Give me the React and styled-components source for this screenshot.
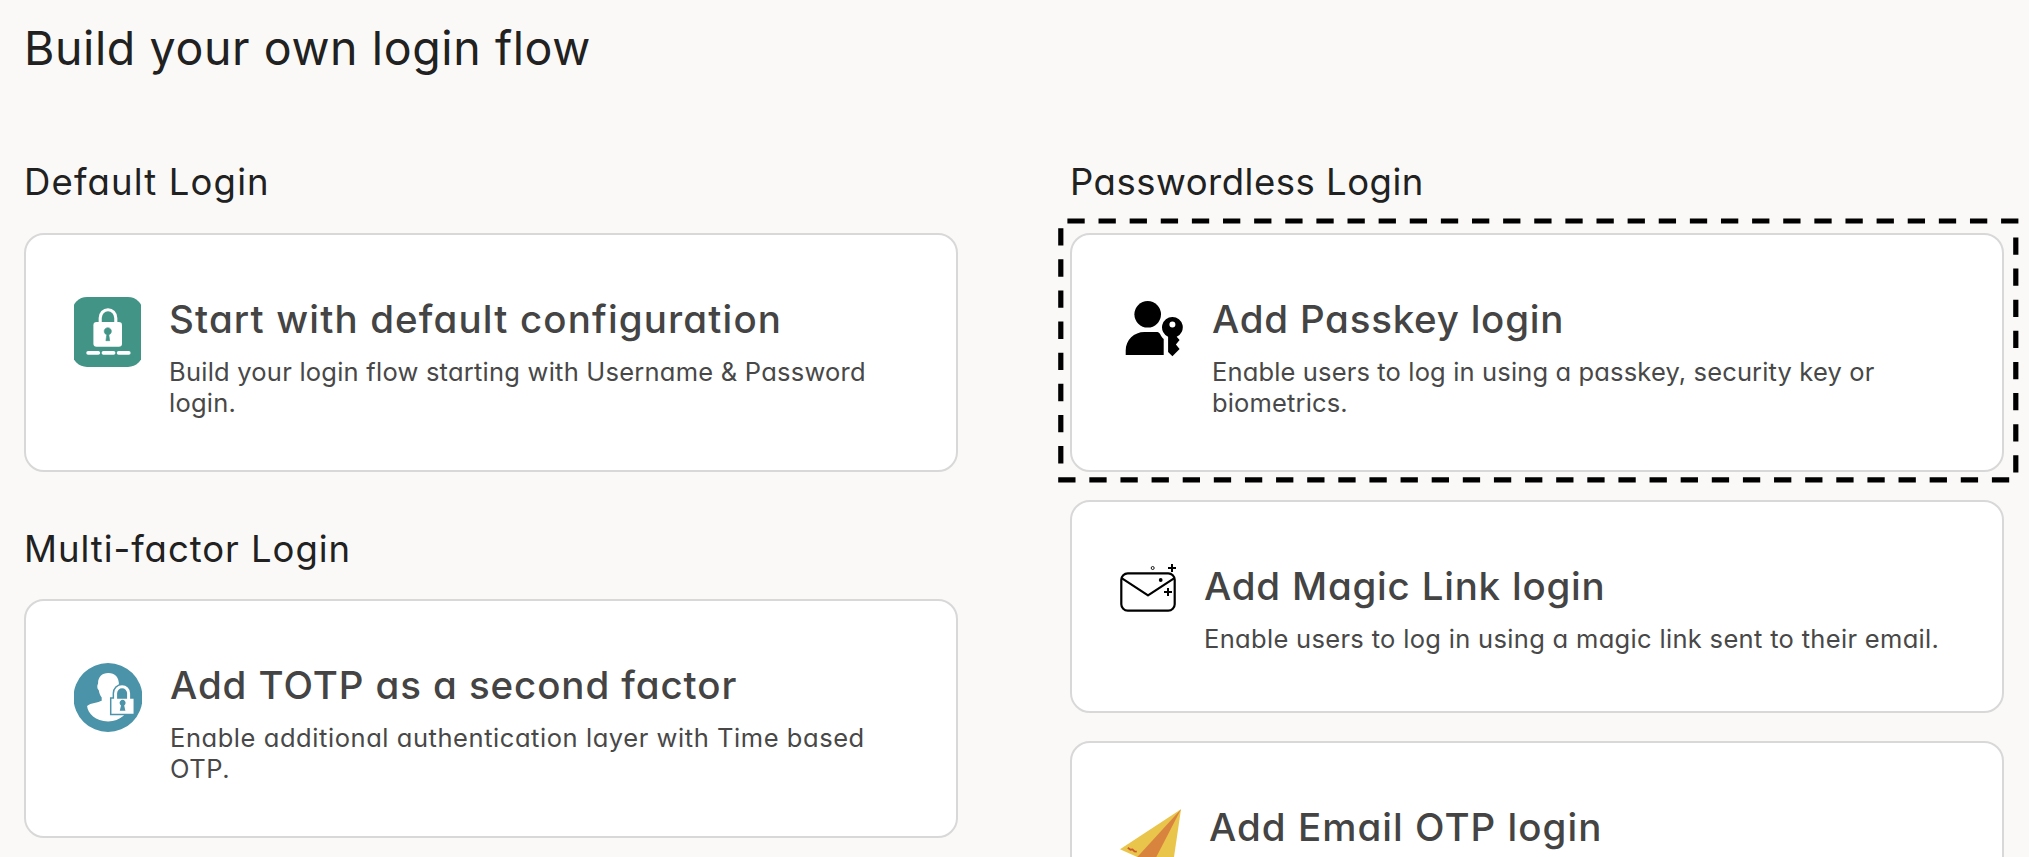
import React from "react";
import styled, { createGlobalStyle } from "styled-components";

const GlobalStyle = createGlobalStyle`
  *, *::before, *::after { box-sizing: border-box; }
  body {
    margin: 0;
    background: #faf9f7;
    font-family: Inter, "Liberation Sans", sans-serif;
    font-feature-settings: "cv11";
  }
`;

const Page = styled.main`
  height: 100vh;
  overflow: hidden;
  padding: 18px 25px 0 24px;
`;

const PageTitle = styled.h1`
  margin: 0 0 80px;
  font-size: 46.5px;
  line-height: 60px;
  font-weight: 400;
  letter-spacing: 0.6px;
  color: #212121;
`;

const Columns = styled.div`
  display: grid;
  grid-template-columns: 1fr 1fr;
  column-gap: 112px;
  align-items: start;
`;

const SectionTitle = styled.h2`
  margin: 0 0 27px;
  font-size: 36.5px;
  line-height: 48px;
  font-weight: 400;
  letter-spacing: ${(p) => p.$tracking}px;
  color: #212121;
`;

const Section = styled.section`
  display: flex;
  flex-direction: column;

  & + & ${SectionTitle} {
    margin-bottom: 26px;
  }
`;

const Column = styled.div`
  display: flex;
  flex-direction: column;
  gap: 53px;
`;

const CardList = styled.div`
  display: flex;
  flex-direction: column;
  gap: 28px;
`;

const Card = styled.article`
  position: relative;
  display: flex;
  align-items: flex-start;
  gap: 28px;
  min-height: 213px;
  padding: 60px 48px 52px;
  border: 2px solid #d8d8d8;
  border-radius: 20px;
  background: #fff;
`;

const CardIcon = styled.svg`
  flex: none;
  display: block;
  margin-top: 2px;
`;

const CardBody = styled.div`
  flex: 1;
  min-width: 0;
`;

const CardTitle = styled.h3`
  margin: 0;
  font-size: 38.5px;
  line-height: 48px;
  font-weight: 500;
  letter-spacing: ${(p) => p.$tracking}px;
  color: #444;
`;

const CardText = styled.p`
  margin: 13px 0 0;
  font-size: 25.5px;
  line-height: 31px;
  font-weight: 400;
  letter-spacing: ${(p) => p.$tracking}px;
  color: #484848;
`;

const Outline = styled.svg`
  position: absolute;
  left: -16px;
  top: -19px;
  overflow: visible;
  pointer-events: none;
`;

const LockIcon = () => (
  <CardIcon width="67" height="70" viewBox="0 0 67 70">
    <rect x="-2" width="71" height="70" rx="15" fill="#429586" />
    <path d="M26.2 27V21a7.8 8.3 0 0 1 15.6 0V27" fill="none" stroke="#fff" strokeWidth="3.1" />
    <rect x="19.4" y="25" width="28.6" height="24.7" rx="3.2" fill="#fff" />
    <path d="M31.9 43.7l.9-6a3.6 3.6 0 1 1 2 0l.9 6z" fill="#429586" stroke="#429586" strokeWidth=".6" />
    <g fill="#fff">
      <rect x="12.3" y="54" width="13.8" height="3.7" rx="1.8" />
      <rect x="27.6" y="54" width="13.8" height="3.7" rx="1.8" />
      <rect x="42.8" y="54" width="13.8" height="3.7" rx="1.8" />
    </g>
  </CardIcon>
);

const TotpIcon = () => (
  <CardIcon width="68" height="69" viewBox="0 0 68 69">
    <circle cx="34" cy="34.5" r="34.5" fill="#4b93a8" />
    <path
      d="M34.3 9.9c-6.4 0-10.2 4.2-10.2 9.8 0 1.4-.8 2-.8 3.7 0 1.8.5 3 1.4 3.5.5 3.3 1.5 5.6 3 7.5v3.3c-3.5 1.8-11 2.2-14.6 5.2.5 7 8.5 15.5 21 15.5S54 50 55 43l-14-6v-3c2-2.5 4-6.5 4-12 0-8-4-12.1-10.7-12.1z"
      fill="#fff"
    />
    <path d="M41.6 36v-5.7a6.5 6.6 0 0 1 13 0V36" fill="none" stroke="#4b93a8" strokeWidth="6" />
    <rect x="36.7" y="35" width="23.6" height="16.5" fill="#fff" stroke="#4b93a8" strokeWidth="1.5" />
    <path d="M41.6 37v-6.7a6.5 6.6 0 0 1 13 0V37" fill="none" stroke="#fff" strokeWidth="3" />
    <path d="M45.8 47.7l1.2-5.3a3 3 0 1 1 3.2 0l1.2 5.3z" fill="#4b93a8" />
  </CardIcon>
);

const PasskeyIcon = () => (
  <CardIcon width="64" height="64" viewBox="0 0 64 64">
    <circle cx="27.7" cy="17.3" r="13.3" />
    <path d="M5.7 58v-4.5C5.7 43 14 35 24.5 35H36c2.2 0 3.4.6 4.2 2.3.8 1.9 1.9 3.4 3.5 4.8V58z" />
    <path
      fillRule="evenodd"
      d="M52.4 20a10.3 10.3 0 0 1 4.3 19.7L59.6 43l-3.7 4.4 3.7 4.6-7.2 7.3-4.3-4.3V39.7A10.3 10.3 0 0 1 52.4 20zm0 4.4a3 3 0 1 0 0 6 3 3 0 0 0 0-6z"
    />
  </CardIcon>
);

const MagicLinkIcon = () => (
  <CardIcon width="56" height="48" viewBox="0 0 56 48" fill="none" stroke="#000" strokeWidth="2.2">
    <rect x="1.3" y="9.3" width="53.4" height="37.4" rx="6.5" />
    <path d="M2 14.3l26 17 26-17" strokeLinejoin="round" />
    <path d="M52 0v8M48 4h8M48 24v8M44 28h8" strokeWidth="2" />
    <circle cx="32.7" cy="4" r="1.5" strokeWidth=".9" />
    <circle cx="40.7" cy="16" r="1.9" fill="#000" stroke="none" />
  </CardIcon>
);

const PaperPlaneIcon = () => (
  <CardIcon width="61" height="52" viewBox="0 0 61 52">
    <path d="M61 4.3L0 44.3l17.3 7.7H54z" fill="#eac54b" />
    <path d="M61 4.3L17.3 52h19z" fill="#d9843e" />
    <path d="M7.8 42.7l2.7 2 2-.3 2 2 2.3.3" fill="none" stroke="#c95a30" strokeWidth="1.8" />
  </CardIcon>
);

const DashedOutline = () => (
  <Outline width="965" height="269" viewBox="0 0 965 269" fill="none">
    <path
      d="M11.4 5H959.8V263.8H4.8V5H11.4"
      stroke="#000"
      strokeWidth="5.2"
      strokeDasharray="17.3 13.823"
    />
  </Outline>
);

const LoginOption = ({ icon: Icon, title, tracking, text, textTracking, highlighted }) => (
  <Card>
    <Icon />
    <CardBody>
      <CardTitle $tracking={tracking}>{title}</CardTitle>
      {text && <CardText $tracking={textTracking}>{text}</CardText>}
    </CardBody>
    {highlighted && <DashedOutline />}
  </Card>
);

export default function App() {
  return (
    <>
      <GlobalStyle />
      <Page>
        <PageTitle>Build your own login flow</PageTitle>
        <Columns>
          <Column>
            <Section>
              <SectionTitle $tracking={1.15}>Default Login</SectionTitle>
              <LoginOption
                icon={LockIcon}
                title="Start with default configuration"
                tracking={1.15}
                text="Build your login flow starting with Username & Password login."
                textTracking={0.23}
              />
            </Section>
            <Section>
              <SectionTitle $tracking={0.95}>Multi-factor Login</SectionTitle>
              <LoginOption
                icon={TotpIcon}
                title="Add TOTP as a second factor"
                tracking={0.91}
                text="Enable additional authentication layer with Time based OTP."
                textTracking={0.56}
              />
            </Section>
          </Column>
          <Section>
            <SectionTitle $tracking={0.5}>Passwordless Login</SectionTitle>
            <CardList>
              <LoginOption
                icon={PasskeyIcon}
                title="Add Passkey login"
                tracking={0.76}
                text="Enable users to log in using a passkey, security key or biometrics."
                textTracking={0.145}
                highlighted
              />
              <LoginOption
                icon={MagicLinkIcon}
                title="Add Magic Link login"
                tracking={0.78}
                text="Enable users to log in using a magic link sent to their email."
                textTracking={0.32}
              />
              <LoginOption icon={PaperPlaneIcon} title="Add Email OTP login" tracking={1.03} />
            </CardList>
          </Section>
        </Columns>
      </Page>
    </>
  );
}
